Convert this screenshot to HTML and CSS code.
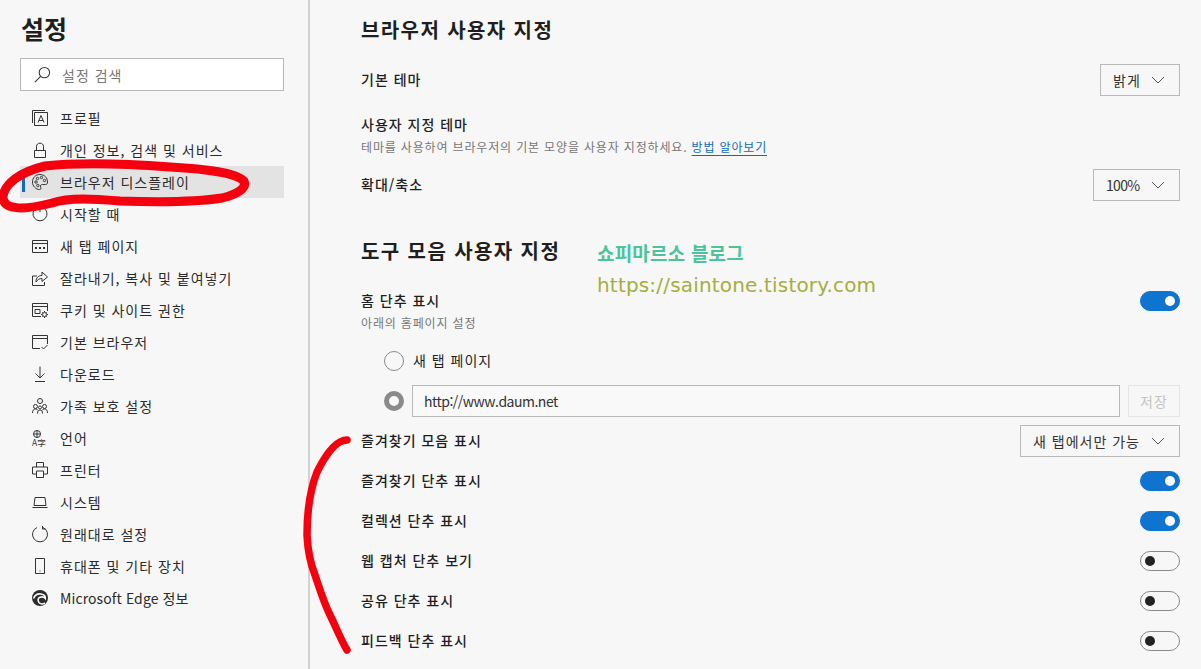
FILE: index.html
```html
<!DOCTYPE html>
<html lang="ko">
<head>
    <meta charset="UTF-8">
    <title>설정</title>
    <link rel="stylesheet" href="styles.css">
</head>
<body>
    <div class="page">
        <aside class="sidebar">
            <h1>설정</h1>
            <div class="search">
                <svg class="search-icon" viewBox="0 0 18 18"><circle cx="11" cy="7" r="5.5"/><path d="M7 11l-6 6"/></svg>
                <span>설정 검색</span>
            </div>
            <nav class="menu">
                <div class="item">
                    <svg viewBox="0 0 16 16"><path d="M.5 13V.5H13"/><path d="M2.5 15.5V2.500H15.500V15.500Z"/><path d="M6 12.500L9 5.500L12 12.500M7 10.500H11"/></svg>
                    <span>프로필</span>
                </div>
                <div class="item">
                    <svg viewBox="0 0 16 16"><path d="M2.500 8.500H13.500V15.500H2.500Z"/><path d="M4.500 8.500V4.500C4.500.0 11.500.0 11.500 4.500V8.500"/></svg>
                    <span>개인 정보, 검색 및 서비스</span>
                </div>
                <div class="item active">
                    <svg viewBox="0 0 16 16"><path d="M8 .5C3.500.5.500 3.800.500 8C.500 12.200 3.800 15.500 7.500 15.500C9.500 15.500 9 13.800 8.500 13C8 11.500 9 10.500 10.500 10.500H13.500C15 10.500 15.500 9.500 15.500 8C15.500 3.800 12.500.5 8 .5Z"/><circle cx="4" cy="8" r="1.200"/><circle cx="5.500" cy="4.500" r="1.200"/><circle cx="9.500" cy="3.500" r="1.200"/><circle cx="12.500" cy="6.500" r="1.200"/><circle cx="5.800" cy="11.500" r="1.200"/></svg>
                    <span>브라우저 디스플레이</span>
                </div>
                <div class="item">
                    <svg viewBox="0 0 16 16"><path d="M5 1.500A7 7 0 1 0 11 1.500"/><path d="M8 0V6"/></svg>
                    <span>시작할 때</span>
                </div>
                <div class="item">
                    <svg viewBox="0 0 16 16"><path d="M.5 2.500H15.500V14.500H.5Z"/><path d="M.5 5.500H15.500"/><path class="dots" d="M3 9H5V11H3ZM7 9H9V11H7ZM11 9H13V11H11Z"/></svg>
                    <span>새 탭 페이지</span>
                </div>
                <div class="item">
                    <svg viewBox="0 0 16 16"><path d="M5 6H.5V15.500H12.500V12"/><path d="M4 12C4 7.500 6.500 5.500 10 5.500V2L15.500 7L10 11.500V8.500C7.500 8.500 5.500 9.500 4 12Z"/></svg>
                    <span>잘라내기, 복사 및 붙여넣기</span>
                </div>
                <div class="item">
                    <svg viewBox="0 0 16 16"><path d="M9 14.500H.5V1.500H15.500V9"/><path d="M.5 4.500H15.500"/><path d="M3 7.500H8V11.500H3Z"/><circle cx="12.500" cy="12.500" r="2"/><path d="M12.500 9V10M12.500 15V16M9 12.500H10M15 12.500H16M10.300 10.300L11 11M14 14L14.700 14.700M14.700 10.300L14 11M11 14L10.300 14.700"/></svg>
                    <span>쿠키 및 사이트 권한</span>
                </div>
                <div class="item">
                    <svg viewBox="0 0 16 16"><path d="M8 14.500H.5V1.500H15.500V10"/><path d="M.5 4.500H15.500"/><path d="M9.500 13L11.500 15L15.500 11"/></svg>
                    <span>기본 브라우저</span>
                </div>
                <div class="item">
                    <svg viewBox="0 0 16 16"><path d="M8 .5V12"/><path d="M3.500 7.500L8 12L12.500 7.500"/><path d="M3 15.500H13"/></svg>
                    <span>다운로드</span>
                </div>
                <div class="item">
                    <svg viewBox="0 0 16 16"><circle cx="8" cy="3" r="2.500"/><circle cx="3.500" cy="8.500" r="2"/><circle cx="12.500" cy="8.500" r="2"/><circle cx="8" cy="9.500" r="1.500"/><path d="M.5 15C.5 12.500 1.500 11 3.500 11C4.500 11 5.200 11.400 5.700 12M15.500 15C15.500 12.500 14.500 11 12.500 11C11.500 11 10.800 11.400 10.300 12M5.500 15.500C5.500 13 6.500 12 8 12C9.500 12 10.500 13 10.500 15.500"/></svg>
                    <span>가족 보호 설정</span>
                </div>
                <div class="item">
                    <svg viewBox="0 0 16 16"><circle cx="5" cy="4" r="3.500"/><path d="M1.500 4H8.500M5 .5V7.500"/><text x="0" y="15.500" class="lang">A字</text></svg>
                    <span>언어</span>
                </div>
                <div class="item">
                    <svg viewBox="0 0 16 16"><path d="M4.500 5V.5H11.500V5"/><path d="M4 12H.5V5H15.500V12H12"/><path d="M4.500 9H11.500V15.500H4.500Z"/></svg>
                    <span>프린터</span>
                </div>
                <div class="item">
                    <svg viewBox="0 0 16 16"><path d="M3 3.500H13L14 11.500H2Z"/><path d="M.5 13.500H15.500"/></svg>
                    <span>시스템</span>
                </div>
                <div class="item">
                    <svg viewBox="0 0 16 16"><path d="M5 1.500A7.500 7.500 0 1 0 11 1.500"/><path d="M10.500 .0V3H13.500"/></svg>
                    <span>원래대로 설정</span>
                </div>
                <div class="item">
                    <svg viewBox="0 0 16 16"><path d="M3.500 .5H12.500V15.500H3.500Z"/><path d="M7.500 13H8.500"/></svg>
                    <span>휴대폰 및 기타 장치</span>
                </div>
                <div class="item">
                    <svg viewBox="0 0 16 16"><circle class="edge" cx="8" cy="8" r="8"/><path class="edge-cut" d="M1.500 8.500C3 5 6 3.500 9 4C12 4.500 13.500 6.500 13.300 8.500C12 7 9.500 6.500 7.500 7.500C6 8.300 5.500 10.500 7 12.500C8.500 14.200 11 14.200 13 13"/></svg>
                    <span class="latin">Microsoft Edge 정보</span>
                </div>
            </nav>
        </aside>

        <main class="content">
            <h2>브라우저 사용자 지정</h2>
            <div class="row">
                <b>기본 테마</b>
                <div class="select select-theme">밝게 <svg viewBox="0 0 14 8"><path d="M1 1L7 7L13 1"/></svg></div>
            </div>
            <div class="row row-text row-theme">
                <b>사용자 지정 테마</b>
                <p>테마를 사용하여 브라우저의 기본 모양을 사용자 지정하세요. <a href="#">방법 알아보기</a></p>
            </div>
            <div class="row">
                <b>확대/축소</b>
                <div class="select select-zoom">100% <svg viewBox="0 0 14 8"><path d="M1 1L7 7L13 1"/></svg></div>
            </div>

            <h2 class="second">도구 모음 사용자 지정</h2>
            <div class="row row-home">
                <div class="row-text">
                    <b>홈 단추 표시</b>
                    <p>아래의 홈페이지 설정</p>
                </div>
                <div class="toggle on"></div>
            </div>
            <div class="option">
                <div class="radio"></div>
                <span class="option-label">새 탭 페이지</span>
            </div>
            <div class="option">
                <div class="radio checked"></div>
                <div class="url">http://www.daum.net</div>
                <div class="save">저장</div>
            </div>
            <div class="row">
                <b>즐겨찾기 모음 표시</b>
                <div class="select select-bar">새 탭에서만 가능 <svg viewBox="0 0 14 8"><path d="M1 1L7 7L13 1"/></svg></div>
            </div>
            <div class="row"><b>즐겨찾기 단추 표시</b><div class="toggle on"></div></div>
            <div class="row"><b>컬렉션 단추 표시</b><div class="toggle on"></div></div>
            <div class="row"><b>웹 캡처 단추 보기</b><div class="toggle"></div></div>
            <div class="row"><b>공유 단추 표시</b><div class="toggle"></div></div>
            <div class="row"><b>피드백 단추 표시</b><div class="toggle"></div></div>
        </main>

        <div class="stamp">
            <div class="stamp-name">쇼피마르소 블로그</div>
            <div class="stamp-url">https://saintone.tistory.com</div>
        </div>

        <svg class="marks" viewBox="0 0 1201 669">
            <path d="M52 203C40 206 32 208 22 208C10 208 3 205 3 197C4 184 20 172 45 166C80 162 130 164 170 167C205 169 235 172 244 181C247 188 238 194 222 198C190 203 150 202 120 201C95 199 70 197 52 203"/>
            <path class="bracket" d="M347 440C336 440 325 456 317 472C310 490 307 515 307 535C308 555 311 565 315 575C320 590 324 603 330 615C336 627 341 640 347 650"/>
        </svg>
    </div>
</body>
</html>
```

FILE: styles.css
```css
* {
    box-sizing: border-box;
}

body {
    margin: 0;
    background: #f7f7f7;
    color: #1f1f1f;
    font-family: "Noto Sans CJK KR", "Noto Sans", sans-serif;
    font-size: 14px;
}

.page {
    position: relative;
    display: flex;
    width: 1201px;
    height: 669px;
    overflow: hidden;
}

.sidebar {
    width: 310px;
    flex-shrink: 0;
    padding: 10px 24px 0 20px;
    border-right: 2px solid #d2d2d2;
}

h1 {
    margin: 0 0 12px 1px;
    font-size: 25px;
    line-height: 36px;
    font-weight: 700;
}

.search {
    display: flex;
    align-items: center;
    gap: 11px;
    height: 33px;
    padding-left: 13px;
    background: #fff;
    border: 1px solid #b9b9b9;
    color: #777;
    letter-spacing: 1px;
}

.search-icon {
    width: 17px;
    height: 17px;
    fill: none;
    stroke: #333;
    stroke-width: 1.1;
}

.menu {
    margin-top: 11px;
}

.item {
    position: relative;
    display: flex;
    align-items: center;
    gap: 12px;
    height: 32px;
    padding-left: 12px;
    color: #2b2b2b;
    letter-spacing: 1px;
}

.item .latin {
    letter-spacing: .1px;
}

.item svg {
    width: 16px;
    height: 16px;
    flex-shrink: 0;
    fill: none;
    stroke: #333;
    stroke-width: 1;
    overflow: visible;
}

.item .dots {
    fill: #333;
    stroke: none;
}

.item .lang {
    fill: #333;
    stroke: none;
    font-size: 8.500px;
    letter-spacing: 0;
}

.item .edge {
    fill: #2b2b2b;
    stroke: none;
}

.item .edge-cut {
    stroke: #f7f7f7;
    stroke-width: 1.600;
}

.active {
    background: #e3e3e3;
}

.active::before {
    content: "";
    position: absolute;
    left: 2px;
    top: 6px;
    width: 3px;
    height: 20px;
    background: #0f6cbd;
}

.content {
    flex: 1;
    padding: 10px 21px 0 51px;
    letter-spacing: 1px;
}

h2 {
    margin: 0 0 10px;
    font-size: 20px;
    line-height: 40px;
    font-weight: 700;
    letter-spacing: 1.4px;
}

h2.second {
    margin: 26px 0 20px;
}

.row {
    display: flex;
    align-items: center;
    justify-content: space-between;
    min-height: 40px;
}

.row b {
    margin: -1px 0 1px;
    font-weight: 500;
    line-height: 20px;
}

.row p {
    margin: 3px 0 0;
    font-size: 12px;
    line-height: 20px;
    letter-spacing: .84px;
    color: #767676;
}

.row-text {
    display: block;
}

.row-theme {
    height: 45px;
    margin: 14px 0 6px;
    min-height: 0;
}

.row-theme b,
.row-home b {
    display: block;
}

.row-theme b {
    margin-top: 0;
}

.row-home {
    align-items: flex-start;
    min-height: 50px;
}

.row p a {
    color: #0f6cbd;
    text-underline-offset: 3px;
}

.select {
    display: flex;
    align-items: center;
    justify-content: space-between;
    height: 32px;
    padding: 0 14px 0 12px;
    border: 1px solid #b9b9b9;
    color: #333;
}

.select svg {
    width: 14px;
    height: 8px;
    fill: none;
    stroke: #555;
    stroke-width: 1;
}

.select-theme {
    width: 80px;
}

.select-zoom {
    width: 87px;
    letter-spacing: -.7px;
}

.select-bar {
    width: 160px;
}

.toggle {
    position: relative;
    width: 40px;
    height: 20px;
    border: 1px solid #8a8a8a;
    border-radius: 10px;
}

.toggle::after {
    content: "";
    position: absolute;
    left: 4px;
    top: 4px;
    width: 10px;
    height: 10px;
    border-radius: 50%;
    background: #222;
}

.toggle.on {
    background: #0f74cf;
    border-color: #0f74cf;
}

.toggle.on::after {
    left: 24px;
    background: #fff;
}

.option {
    display: flex;
    align-items: center;
    height: 40px;
    padding-left: 23px;
}

.option-label {
    margin-bottom: 2px;
}

.radio {
    width: 20px;
    height: 20px;
    margin-right: 9px;
    border: 1px solid #8a8a8a;
    border-radius: 50%;
}

.radio.checked {
    margin-right: 8px;
    border: 5px solid #8a8a8a;
}

.url {
    display: flex;
    align-items: center;
    width: 708px;
    height: 32px;
    padding-left: 11px;
    border: 1px solid #b9b9b9;
    background: #f9f9f9;
    color: #333;
    letter-spacing: -.5px;
}

.save {
    display: flex;
    align-items: center;
    justify-content: center;
    width: 52px;
    height: 32px;
    margin-left: 8px;
    border: 1px solid #e4e4e4;
    color: #c4c4c4;
}

.stamp {
    position: absolute;
    left: 597px;
    top: 238px;
}

.stamp-name {
    font-size: 19px;
    line-height: 30px;
    font-weight: 700;
    letter-spacing: .2px;
    color: #4cc49a;
}

.stamp-url {
    margin-top: 2px;
    font-family: "DejaVu Sans", sans-serif;
    font-size: 20px;
    line-height: 30px;
    letter-spacing: .18px;
    color: #a5ae3f;
}

.marks {
    position: absolute;
    left: 0;
    top: 0;
    width: 1201px;
    height: 669px;
    fill: none;
    stroke: #f5000f;
    stroke-width: 9;
    stroke-linecap: round;
    pointer-events: none;
}

.marks .bracket {
    stroke-width: 7.500;
}
```
